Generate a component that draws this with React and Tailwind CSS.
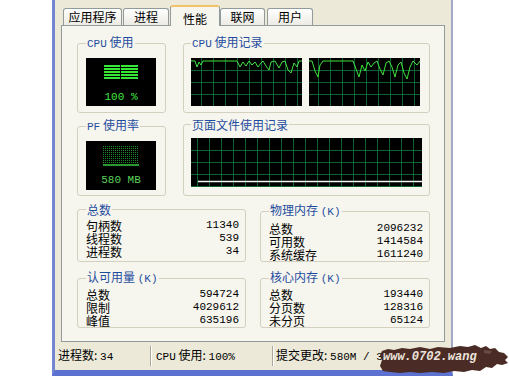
import React from 'react';

const Lat = ({ children, className = '' }) => (
  <span className={`font-['Liberation_Mono',monospace] text-[11px] ${className}`}>{children}</span>
);

const Group = ({ title, className = '', children }) => (
  <fieldset className={`border border-[#d3d0bf] rounded-[3px] ${className}`}>
    <legend className="px-[1px] text-[12px] leading-[13px] text-[#1f4d9e]">{title}</legend>
    {children}
  </fieldset>
);

const Graph = ({ w, h, points, offset = 10, pfLine }) => {
  const vx = [];
  for (let x = offset; x < w; x += 12) vx.push(x);
  const hy = [];
  for (let y = 12; y < h; y += 12) hy.push(y);
  return (
    <svg width={w} height={h} className="block bg-black">
      {vx.map((x) => (
        <line key={'v' + x} x1={x + 0.5} y1={0} x2={x + 0.5} y2={h} stroke="#137a3c" strokeWidth="0.8" />
      ))}
      {hy.map((y) => (
        <line key={'h' + y} x1={0} y1={y + 0.5} x2={w} y2={y + 0.5} stroke="#137a3c" strokeWidth="0.8" />
      ))}
      {points && (
        <polyline
          points={points.map((p) => p.join(',')).join(' ')}
          fill="none"
          stroke="#3fe23f"
          strokeWidth="1"
        />
      )}
      {pfLine && <line x1={7} y1={43.5} x2={w} y2={43.5} stroke="#eef8ee" strokeWidth="1.5" />}
    </svg>
  );
};

const cpu1 = [
  [0, 3], [4, 3], [6, 9], [8, 4], [10, 7], [12, 3], [46, 3], [49, 9], [52, 4], [55, 8], [58, 3],
  [61, 7], [64, 4], [67, 9], [70, 5], [72, 3], [75, 8], [78, 12], [80, 4], [84, 3], [88, 10],
  [91, 4], [94, 3], [97, 12], [100, 15], [103, 5], [106, 9], [108, 3], [111, 3],
];
const cpu2 = [
  [0, 3], [3, 3], [6, 13], [9, 19], [11, 7], [14, 3], [44, 3], [47, 11], [50, 19], [53, 7],
  [56, 13], [59, 4], [62, 9], [65, 5], [68, 3], [71, 11], [74, 17], [77, 5], [80, 3], [83, 9],
  [86, 19], [89, 7], [92, 4], [95, 15], [98, 21], [101, 9], [104, 3], [108, 7], [111, 3],
];

const Row = ({ label, value }) => (
  <div className="flex justify-between items-center h-[13px] leading-[13px]">
    <span className="text-[12px]">{label}</span>
    <Lat>{value}</Lat>
  </div>
);

const tabBase =
  "h-[17px] flex items-center justify-center border border-[#919b9c] border-b-0 rounded-t-[3px] bg-gradient-to-b from-white to-[#ecebe4] text-[12px]";

export default function App() {
  return (
    <div className="w-[509px] h-[376px] bg-white relative overflow-hidden flex font-['Noto_Sans_CJK_SC',sans-serif] text-black">
      <div className="ml-[52px] w-[401px] h-[376px] flex flex-col bg-[#ece9d8] border-l-[3px] border-l-[#7485d1] border-r-2 border-r-[#a2a9c6] border-b-[6px] border-b-[#5d72d0]">
        {/* tabs */}
        <div className="relative z-10 flex items-end h-[25px] pt-[5px] pl-[8px]">
          <div className={`${tabBase} w-[59px]`}>应用程序</div>
          <div className={`${tabBase} ml-[1px] w-[46px]`}>进程</div>
          <div className="ml-[1px] w-[50px] h-[21px] -mb-px flex items-start pt-[3px] justify-center border border-[#919b9c] border-b-0 border-t-2 border-t-[#f2c46a] rounded-t-[3px] bg-[#f6f5ee] text-[12px]">
            性能
          </div>
          <div className={`${tabBase} w-[45px]`}>联网</div>
          <div className={`${tabBase} ml-[2px] w-[46px]`}>用户</div>
        </div>

        {/* panel */}
        <div className="ml-[6px] w-[384px] h-[317px] border border-[#919b9c] bg-[#f6f5ee] pl-[15px] pt-[9px]">
          <div className="flex gap-[17px]">
            <Group title={<><Lat>CPU</Lat> 使用</>} className="w-[89px] h-[78px] px-[8px]">
              <div className="mt-[7px] w-[70px] h-[48px] bg-black flex flex-col items-center">
                <svg width="34" height="15" className="mt-[7px] block">
                  {[0, 1, 2, 3, 4].map((i) => (
                    <g key={i}>
                      <rect x="0" y={i * 3} width="16" height="2" fill="#34e834" />
                      <rect x="17" y={i * 3} width="17" height="2" fill="#34e834" />
                    </g>
                  ))}
                </svg>
                <div className="mt-[12px] font-['Liberation_Mono',monospace] text-[11px] leading-[11px] text-[#40e840]">
                  100 %
                </div>
              </div>
            </Group>
            <Group title={<><Lat>CPU</Lat> 使用记录</>} className="w-[247px] h-[78px] px-[7px]">
              <div className="mt-[7px] flex gap-[7px]">
                <Graph w={111} h={48} points={cpu1} offset={10} />
                <Graph w={111} h={48} points={cpu2} offset={9} />
              </div>
            </Group>
          </div>

          <div className="flex gap-[17px] mt-[5px]">
            <Group title={<><Lat>PF</Lat> 使用率</>} className="w-[89px] h-[78px] px-[8px]">
              <div className="mt-[7px] w-[70px] h-[49px] bg-black flex flex-col items-center">
                <svg width="36" height="20" className="mt-[5px] block">
                  <defs>
                    <pattern id="dots" width="2" height="2" patternUnits="userSpaceOnUse">
                      <rect x="0" y="0" width="1" height="1" fill="#1f8a2a" />
                    </pattern>
                  </defs>
                  <rect x="0" y="0" width="36" height="20" fill="url(#dots)" />
                  <rect x="0" y="18" width="36" height="2" fill="#2a9a30" />
                </svg>
                <div className="mt-[9px] font-['Liberation_Mono',monospace] text-[11px] leading-[11px] text-[#5ad05a]">
                  580 MB
                </div>
              </div>
            </Group>
            <Group title="页面文件使用记录" className="w-[247px] h-[78px] px-[7px]">
              <div className="mt-[7px]">
                <Graph w={231} h={49} offset={6} pfLine />
              </div>
            </Group>
          </div>

          <div className="flex gap-[14px] mt-[7px]">
            <Group title="总数" className="w-[169px] h-[59px] pl-[8px] pr-[6px]">
              <div className="mt-[3px]">
                <Row label="句柄数" value="11340" />
                <Row label="线程数" value="539" />
                <Row label="进程数" value="34" />
              </div>
            </Group>
            <Group title={<>物理内存 <Lat>(K)</Lat></>} className="w-[170px] h-[59px] pl-[8px] pr-[6px]">
              <div className="mt-[3px]">
                <Row label="总数" value="2096232" />
                <Row label="可用数" value="1414584" />
                <Row label="系统缓存" value="1611240" />
              </div>
            </Group>
          </div>

          <div className="flex gap-[14px] mt-[8px]">
            <Group title={<>认可用量 <Lat>(K)</Lat></>} className="w-[169px] h-[58px] pl-[8px] pr-[6px]">
              <div className="mt-[2px]">
                <Row label="总数" value="594724" />
                <Row label="限制" value="4029612" />
                <Row label="峰值" value="635196" />
              </div>
            </Group>
            <Group title={<>核心内存 <Lat>(K)</Lat></>} className="w-[170px] h-[58px] pl-[8px] pr-[6px]">
              <div className="mt-[2px]">
                <Row label="总数" value="193440" />
                <Row label="分页数" value="128316" />
                <Row label="未分页" value="65124" />
              </div>
            </Group>
          </div>
        </div>

        {/* status bar */}
        <div className="flex-1 flex items-center text-[12px] whitespace-nowrap overflow-hidden">
          <div className="w-[95px] pl-[3px]">
            进程数: <Lat>34</Lat>
          </div>
          <div className="w-[2px] h-[20px] border-l border-l-[#aca899] border-r border-r-white" />
          <div className="w-[120px] pl-[4px]">
            <Lat>CPU</Lat> 使用: <Lat>100%</Lat>
          </div>
          <div className="w-[2px] h-[20px] border-l border-l-[#aca899] border-r border-r-white" />
          <div className="pl-[2px]">
            提交更改: <Lat>580M / 3</Lat>
          </div>
        </div>
      </div>

      {/* watermark */}
      <div className="absolute left-[380px] top-[344px] w-[129px] h-[32px]">
        <svg width="129" height="32" className="absolute inset-0">
          <path
            d="M2,7 L8,5 L14,6 L22,4 L30,5 L40,3 L50,5 L58,3 L70,4 L80,2 L88,3 L95,1 L101,4 L106,2 L110,5 L115,4 L119,8 L124,9 L128,13 L125,16 L128,19 L122,21 L117,20 L112,24 L106,23 L100,27 L92,26 L84,28 L74,27 L64,29 L52,28 L40,29 L30,28 L20,29 L10,28 L3,27 L0,22 L2,16 L0,11 Z"
            fill="#4a2b25"
          />
          <path d="M104,6 L112,7 L110,10 L104,9 Z" fill="#6a4a44" />
        </svg>
        <div className="absolute left-[3px] top-[6px] font-['Liberation_Mono',monospace] italic font-bold text-[12px] leading-[14px] text-[#ece4dc]">
          www.0702.wang
        </div>
      </div>
    </div>
  );
}
